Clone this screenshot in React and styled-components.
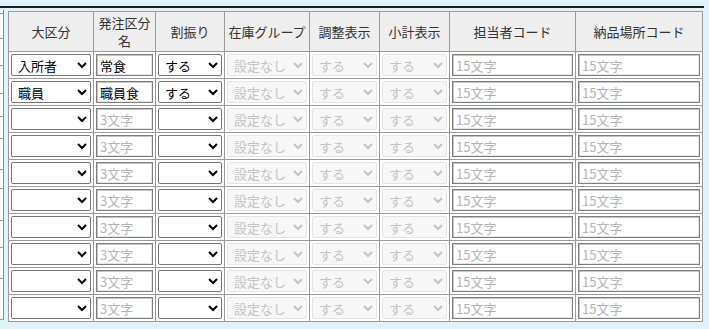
import React from "react";
import styled, { createGlobalStyle } from "styled-components";

const GlobalStyle = createGlobalStyle`
  html, body { margin: 0; padding: 0; }
  body {
    background: #e1f3fa;
    font-family: "Noto Sans CJK JP", "Noto Sans", sans-serif;
    color: #222;
  }
`;

const Page = styled.div`
  padding-top: 6px;
  width: 709px;
  height: 329px;
  box-sizing: border-box;
  overflow: hidden;
`;

const TopRule = styled.div`
  width: 704px;
  height: 2px;
  background: #1b1b1b;
`;

const Body = styled.div`
  display: flex;
  align-items: flex-start;
  margin-top: 2px;
  gap: 4px;
`;

const SideStrip = styled.div`
  width: 3px;
  border-right: 1px solid #8a8a8a;
  background: #fff;
  display: flex;
  flex-direction: column;
`;

const SideRow = styled.div`
  height: ${(p) => p.$h}px;
  border-bottom: 1px solid #9a9a9a;
`;

const Table = styled.table`
  margin-top: 1px;
  border-collapse: collapse;
  table-layout: fixed;
  width: 694px;
  border: 1px solid #8c8c8c;
  background: #fff;
`;

const Th = styled.th`
  height: 39px;
  padding: 0 2px;
  background: #eeeeee;
  border: 1px solid #9a9a9a;
  font-weight: normal;
  font-size: 13px;
  line-height: 18px;
  color: #333;
  text-align: center;
  vertical-align: middle;
`;

const Td = styled.td`
  height: 26px;
  padding: 0 2px;
  border: 1px solid #9a9a9a;
  vertical-align: middle;
`;

const Select = styled.select`
  display: block;
  width: 100%;
  height: 22px;
  box-sizing: border-box;
  margin: 0;
  padding: 0 0 0 2px;
  font-family: "Noto Sans CJK JP", sans-serif;
  font-size: 13px;
  color: #000;
  background: #fff;
  border: 1px solid #767676;
  border-radius: 2px;

  &:disabled {
    color: #aaaaaa;
    background: #f4f4f4;
    border-color: #d8d8d8;
  }
`;

const TextInput = styled.input`
  display: block;
  width: 100%;
  height: 22px;
  box-sizing: border-box;
  margin: 0;
  padding: 0 2px 0 3px;
  font-family: "Noto Sans CJK JP", sans-serif;
  font-size: 13px;
  color: #000;
  background: #fff;
  border: 1px solid #7e7e7e;
  box-shadow: inset 1px 1px 0 #c4c4c4, inset -1px -1px 0 #e6e6e6;
  outline: none;

  &::placeholder {
    color: #b4b4b4;
  }
`;

const columns = [
  { label: "大区分", w: 85 },
  { label: "発注区分\n名", w: 62 },
  { label: "割振り", w: 69 },
  { label: "在庫グループ", w: 85 },
  { label: "調整表示", w: 70 },
  { label: "小計表示", w: 70 },
  { label: "担当者コード", w: 126 },
  { label: "納品場所コード", w: 127 },
];

const rows = [
  { kubun: "入所者", name: "常食", wari: "する" },
  { kubun: "職員", name: "職員食", wari: "する" },
  ...Array.from({ length: 8 }, () => ({ kubun: "", name: "", wari: "" })),
];

const sideRows = [3, 24, 26, 27, 22, 21, 30, 18, 31, 26, 30, 40];

export default function App() {
  return (
    <Page>
      <GlobalStyle />
      <TopRule />
      <Body>
        <SideStrip>
          {sideRows.map((h, i) => (
            <SideRow key={i} $h={h} />
          ))}
        </SideStrip>
        <Table>
          <colgroup>
            {columns.map((c, i) => (
              <col key={i} style={{ width: c.w }} />
            ))}
          </colgroup>
          <thead>
            <tr>
              {columns.map((c, i) => (
                <Th key={i}>
                  {c.label.split("\n").map((l, j) => (
                    <React.Fragment key={j}>
                      {j > 0 && <br />}
                      {l}
                    </React.Fragment>
                  ))}
                </Th>
              ))}
            </tr>
          </thead>
          <tbody>
            {rows.map((r, i) => (
              <tr key={i}>
                <Td>
                  <Select defaultValue={r.kubun}>
                    <option value=""></option>
                    <option value="入所者">入所者</option>
                    <option value="職員">職員</option>
                  </Select>
                </Td>
                <Td>
                  <TextInput defaultValue={r.name} placeholder="3文字" />
                </Td>
                <Td>
                  <Select defaultValue={r.wari}>
                    <option value=""></option>
                    <option value="する">する</option>
                    <option value="しない">しない</option>
                  </Select>
                </Td>
                <Td>
                  <Select disabled defaultValue="設定なし">
                    <option value="設定なし">設定なし</option>
                  </Select>
                </Td>
                <Td>
                  <Select disabled defaultValue="する">
                    <option value="する">する</option>
                  </Select>
                </Td>
                <Td>
                  <Select disabled defaultValue="する">
                    <option value="する">する</option>
                  </Select>
                </Td>
                <Td>
                  <TextInput placeholder="15文字" />
                </Td>
                <Td>
                  <TextInput placeholder="15文字" />
                </Td>
              </tr>
            ))}
          </tbody>
        </Table>
      </Body>
    </Page>
  );
}
